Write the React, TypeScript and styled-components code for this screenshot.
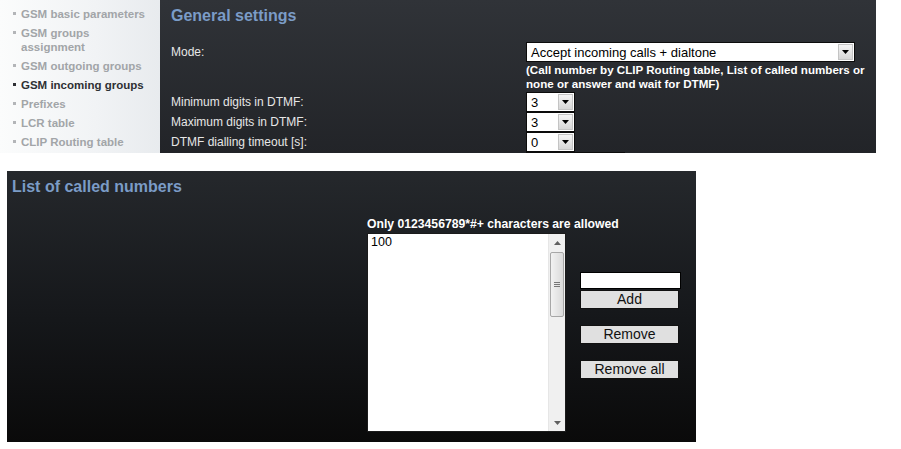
import styled, {createGlobalStyle} from "styled-components";

const GlobalStyle = createGlobalStyle`
  html, body {
    margin: 0;
    padding: 0;
    background: #ffffff;
  }

  body {
    font-family: "Liberation Sans", Arial, sans-serif;
  }
`;

const Page = styled.div`
  display: flex;
  flex-direction: column;
  width: 901px;
  height: 449px;
  overflow: hidden;
`;

const TopSection = styled.div`
  display: flex;
  height: 153px;
  flex-shrink: 0;
`;

const Sidebar = styled.nav`
  width: 160px;
  flex-shrink: 0;
  padding-top: 7px;
  box-sizing: border-box;
  background: linear-gradient(to right, #fbfcfc 0%, #f1f3f5 60%, #e8ebee 100%);
`;

const NavItem = styled.div<{ $active?: boolean }>`
  display: flex;
  align-items: flex-start;
  margin-bottom: 5px;
  font-size: 11.5px;
  font-weight: bold;
  line-height: 14px;
  color: ${({$active}) => ($active ? "#2e3034" : "#a2a5a8")};
`;

const Bullet = styled.span<{ $active?: boolean }>`
  width: 3px;
  height: 3px;
  flex-shrink: 0;
  margin: 5px 5px 0 13px;
  background: ${({$active}) => ($active ? "#2e3034" : "#b3b5b8")};
`;

const NavText = styled.span`
  width: 130px;
`;

const SettingsPanel = styled.section`
  width: 716px;
  flex-shrink: 0;
  overflow: hidden;
  padding: 6px 0 0 11px;
  box-sizing: border-box;
  background: linear-gradient(#303338, #222428);
`;

const PanelTitle = styled.h2`
  margin: 0;
  height: 20px;
  font-size: 16px;
  line-height: 20px;
  font-weight: bold;
  color: #7b9cc7;
`;

const FormGrid = styled.div`
  display: grid;
  grid-template-columns: 355px 1fr;
  margin-top: 16px;
  align-items: center;
`;

const Label = styled.div`
  font-size: 12px;
  line-height: 14px;
  color: #e6e6e6;
`;

const Hint = styled.div`
  padding: 1px 0;
  font-size: 11.6px;
  line-height: 14px;
  font-weight: bold;
  color: #ffffff;
  white-space: nowrap;
`;

const SelectBox = styled.div<{ $width: number }>`
  display: flex;
  align-items: center;
  width: ${({$width}) => $width}px;
  height: 20px;
  box-sizing: border-box;
  border: 1px solid #0c0c0c;
  background: #ffffff;
  font-size: 13px;
  color: #000000;
`;

const SelectValue = styled.span`
  flex: 1;
  padding-left: 4px;
  white-space: nowrap;
  overflow: hidden;
`;

const ArrowBox = styled.span`
  display: flex;
  align-items: center;
  justify-content: center;
  width: 15px;
  height: 16px;
  margin-right: 1px;
  box-sizing: border-box;
  border: 1px solid #c4c4c4;
  background: linear-gradient(#f4f4f4, #d6d6d6);
`;

const ListPanel = styled.section`
  width: 689px;
  height: 271px;
  flex-shrink: 0;
  margin: 18px 0 0 7px;
  padding: 6px 0 0 5px;
  box-sizing: border-box;
  background: linear-gradient(#25282c 0%, #15171a 55%, #0a0a0a 100%);
`;

const Editor = styled.div`
  margin: 20px 0 0 355px;
`;

const EditorHint = styled.div`
  font-size: 12.2px;
  line-height: 14px;
  font-weight: bold;
  color: #ffffff;
  white-space: nowrap;
`;

const EditorRow = styled.div`
  display: flex;
  margin-top: 2px;
`;

const ListBox = styled.div`
  display: flex;
  width: 199px;
  height: 199px;
  box-sizing: border-box;
  border: 1px solid #1b1b1b;
  background: #ffffff;
`;

const ListItems = styled.div`
  flex: 1;
  padding: 1px 0 0 3px;
  font-size: 12.5px;
  line-height: 15px;
  color: #000000;
`;

const Scrollbar = styled.div`
  display: flex;
  flex-direction: column;
  align-items: center;
  width: 17px;
  background: #f0f0f0;
  border-left: 1px solid #e6e6e6;
  box-sizing: border-box;
`;

const ScrollArrow = styled.div`
  display: flex;
  align-items: center;
  justify-content: center;
  height: 17px;
  width: 100%;
`;

const ScrollThumb = styled.div`
  display: flex;
  align-items: center;
  justify-content: center;
  width: 14px;
  height: 65px;
  margin-top: 1px;
  box-sizing: border-box;
  border: 1px solid #a7a7a7;
  border-radius: 2px;
  background: linear-gradient(to right, #f2f2f2, #dadada);
`;

const ScrollTrack = styled.div`
  flex: 1;
`;

const SideControls = styled.div`
  display: flex;
  flex-direction: column;
  margin-left: 14px;
  padding-top: 39px;
`;

const NumberInput = styled.input`
  width: 101px;
  height: 17px;
  box-sizing: border-box;
  margin: 0 0 1px;
  padding: 0 2px;
  border: 1px solid #000000;
  background: #ffffff;
  font-family: inherit;
  font-size: 13px;
  outline: none;
`;

const ActionButton = styled.button<{ $gap?: number }>`
  width: 99px;
  height: 19px;
  margin-top: ${({$gap}) => $gap ?? 0}px;
  padding: 0;
  box-sizing: border-box;
  border: 1px solid #111111;
  background: #e0e0e0;
  font-family: inherit;
  font-size: 14px;
  line-height: 17px;
  color: #111111;
  cursor: pointer;
`;

const DownTriangle = () => (
  <svg width="7" height="4" viewBox="0 0 7 4">
    <path d="M0 0h7L3.5 4z" fill="#000"/>
  </svg>
);

const ScrollTriangle = ({up}: { up?: boolean }) => (
  <svg width="7" height="4" viewBox="0 0 7 4">
    <path d={up ? "M0 4h7L3.5 0z" : "M0 0h7L3.5 4z"} fill="#606060"/>
  </svg>
);

const Grip = () => (
  <svg width="6" height="6" viewBox="0 0 6 6">
    <path d="M0 0.5h6M0 2.5h6M0 4.5h6" stroke="#777" strokeWidth="1"/>
  </svg>
);

const Select = ({value, width}: { value: string; width: number }) => (
  <SelectBox $width={width}>
    <SelectValue>{value}</SelectValue>
    <ArrowBox><DownTriangle/></ArrowBox>
  </SelectBox>
);

const navItems = [
  "GSM basic parameters",
  "GSM groups assignment",
  "GSM outgoing groups",
  "GSM incoming groups",
  "Prefixes",
  "LCR table",
  "CLIP Routing table",
];

export default function App() {
  return (
    <>
      <GlobalStyle/>
      <Page>
        <TopSection>
          <Sidebar>
            {navItems.map((item) => {
              const active = item === "GSM incoming groups";
              return (
                <NavItem key={item} $active={active}>
                  <Bullet $active={active}/>
                  <NavText>{item}</NavText>
                </NavItem>
              );
            })}
          </Sidebar>
          <SettingsPanel>
            <PanelTitle>General settings</PanelTitle>
            <FormGrid>
              <Label>Mode:</Label>
              <Select value="Accept incoming calls + dialtone" width={329}/>
              <span/>
              <Hint>
                (Call number by CLIP Routing table, List of called numbers or<br/>
                none or answer and wait for DTMF)
              </Hint>
              <Label>Minimum digits in DTMF:</Label>
              <Select value="3" width={49}/>
              <Label>Maximum digits in DTMF:</Label>
              <Select value="3" width={49}/>
              <Label>DTMF dialling timeout [s]:</Label>
              <Select value="0" width={49}/>
              <span/>
              <Select value="" width={99}/>
            </FormGrid>
          </SettingsPanel>
        </TopSection>
        <ListPanel>
          <PanelTitle>List of called numbers</PanelTitle>
          <Editor>
            <EditorHint>Only 0123456789*#+ characters are allowed</EditorHint>
            <EditorRow>
              <ListBox>
                <ListItems>100</ListItems>
                <Scrollbar>
                  <ScrollArrow><ScrollTriangle up/></ScrollArrow>
                  <ScrollThumb><Grip/></ScrollThumb>
                  <ScrollTrack/>
                  <ScrollArrow><ScrollTriangle/></ScrollArrow>
                </Scrollbar>
              </ListBox>
              <SideControls>
                <NumberInput type="text" defaultValue=""/>
                <ActionButton>Add</ActionButton>
                <ActionButton $gap={16}>Remove</ActionButton>
                <ActionButton $gap={16}>Remove all</ActionButton>
              </SideControls>
            </EditorRow>
          </Editor>
        </ListPanel>
      </Page>
    </>
  );
}
